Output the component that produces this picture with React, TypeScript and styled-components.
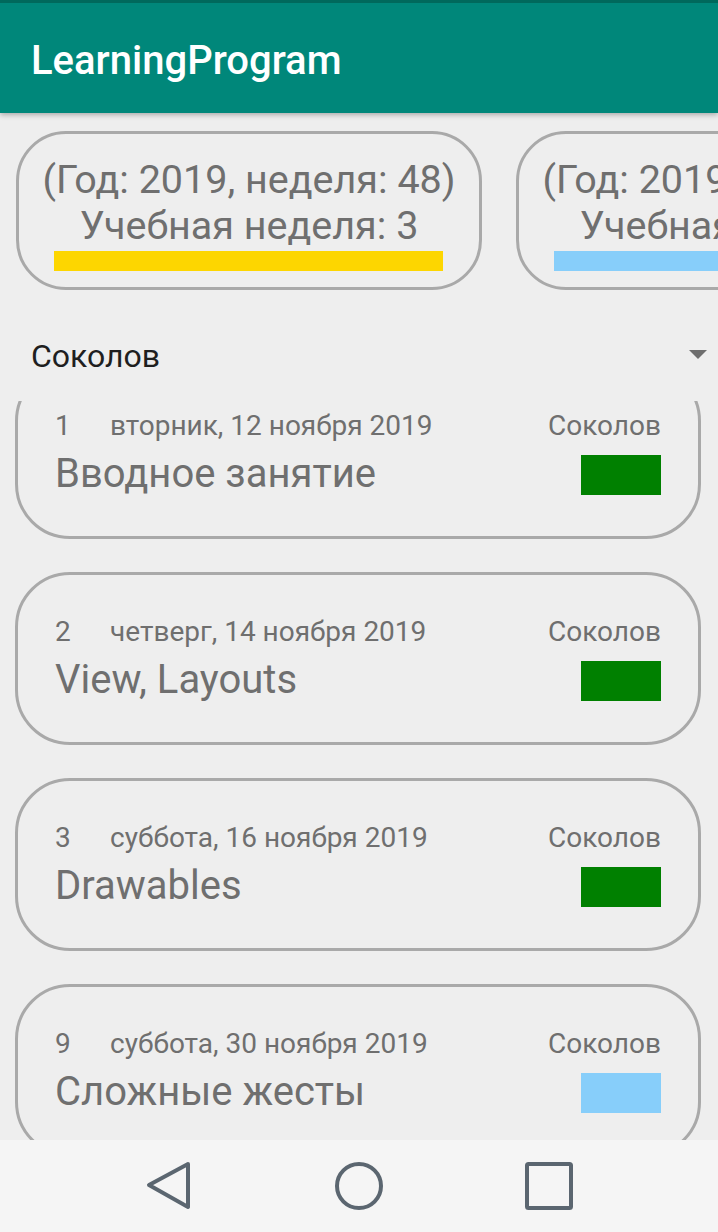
import React, { useLayoutEffect, useRef } from "react";
import styled, { createGlobalStyle } from "styled-components";

const GlobalStyle = createGlobalStyle`
  html, body { margin: 0; padding: 0; background: #eeeeee; }
  body { font-family: Roboto, "Noto Sans", Arial, sans-serif; }
  * { box-sizing: border-box; }
`;

const Screen = styled.div`
  width: 718px;
  height: 1232px;
  display: flex;
  flex-direction: column;
  background: #eeeeee;
  overflow: hidden;
`;

const AppBar = styled.header`
  position: relative;
  z-index: 2;
  height: 113px;
  flex: none;
  background: #00877a;
  border-top: 3px solid #00695c;
  box-shadow: 0 2px 5px rgba(0, 0, 0, 0.28);
  padding: 34px 0 0 31px;
`;

const Title = styled.h1`
  margin: 0;
  font-family: Roboto, Arial, sans-serif;
  font-weight: 500;
  font-size: 40px;
  line-height: 47px;
  color: #ffffff;
`;

const WeekStrip = styled.div`
  flex: none;
  display: flex;
  gap: 34px;
  padding: 18px 0 0 16px;
  overflow: hidden;
`;

const WeekCard = styled.div`
  flex: none;
  width: 466px;
  height: 159px;
  border: 3px solid #a9a9a9;
  border-radius: 50px;
  padding: 23px 0 0 0;
  display: flex;
  flex-direction: column;
  align-items: stretch;
`;

const WeekLine = styled.div`
  display: flex;
  justify-content: center;
  font-size: 39.5px;
  line-height: 46px;
  color: #6f6f6f;
  white-space: nowrap;
`;

const WeekBar = styled.div<{ $color: string }>`
  margin: 2px 36px 0 35px;
  height: 20px;
  background: ${(p) => p.$color};
`;

const Spinner = styled.div`
  flex: none;
  display: flex;
  align-items: center;
  justify-content: space-between;
  padding: 47px 11px 26px 31px;
`;

const SpinnerText = styled.span`
  font-size: 32px;
  line-height: 38px;
  color: #1f1f1f;
`;

const SpinnerArrow = styled.span`
  width: 0;
  height: 0;
  border-left: 9px solid transparent;
  border-right: 9px solid transparent;
  border-top: 9px solid #6e6e6e;
  margin-top: -4px;
`;

const LessonList = styled.div`
  flex: 1;
  min-height: 0;
  overflow: hidden;
  display: flex;
  flex-direction: column;
  gap: 33px;
  padding: 16px 17px 16px 15px;
`;

const LessonCard = styled.div`
  flex: none;
  height: 173px;
  border: 3px solid #a9a9a9;
  border-radius: 55px;
  padding: 40px 37px 0 37px;
  display: flex;
  flex-direction: column;
`;

const MetaRow = styled.div`
  display: flex;
  align-items: baseline;
  font-size: 28px;
  line-height: 33px;
  color: #6f6f6f;
  white-space: nowrap;
`;

const Num = styled.span`
  width: 55px;
  flex: none;
`;

const DateText = styled.span`
  flex: 1;
`;

const Teacher = styled.span`
  flex: none;
`;

const TitleRow = styled.div`
  margin-top: 8px;
  display: flex;
  align-items: center;
  justify-content: space-between;
`;

const LessonTitle = styled.span`
  font-size: 40px;
  line-height: 47px;
  color: #6f6f6f;
  white-space: nowrap;
`;

const Swatch = styled.span<{ $color: string }>`
  flex: none;
  width: 80px;
  height: 40px;
  margin-top: 3px;
  background: ${(p) => p.$color};
`;

const NavBar = styled.nav`
  flex: none;
  height: 92px;
  background: #f5f5f5;
  display: flex;
  justify-content: center;
  align-items: center;
`;

const NavButton = styled.div`
  width: 190px;
  height: 92px;
  display: flex;
  align-items: center;
  justify-content: center;
`;

const weeks = [
  { year: 2019, week: 48, study: 3, color: "#fdd600" },
  { year: 2019, week: 49, study: 4, color: "#87cefa" },
];

const lessons = [
  { n: 1, date: "вторник, 12 ноября 2019", title: "Вводное занятие", color: "#008000" },
  { n: 2, date: "четверг, 14 ноября 2019", title: "View, Layouts", color: "#008000" },
  { n: 3, date: "суббота, 16 ноября 2019", title: "Drawables", color: "#008000" },
  { n: 9, date: "суббота, 30 ноября 2019", title: "Сложные жесты", color: "#87cefa" },
  { n: 10, date: "вторник, 3 декабря 2019", title: "Анимации", color: "#87cefa" },
];

const navStroke = "#5b6670";

export default function App() {
  const listRef = useRef<HTMLDivElement>(null);
  useLayoutEffect(() => {
    if (listRef.current) listRef.current.scrollTop = 51;
  }, []);

  return (
    <>
      <GlobalStyle />
      <Screen>
        <AppBar>
          <Title>LearningProgram</Title>
        </AppBar>
        <WeekStrip>
          {weeks.map((w) => (
            <WeekCard key={w.week}>
              <WeekLine>
                (Год: {w.year}, неделя: {w.week})
              </WeekLine>
              <WeekLine>Учебная неделя: {w.study}</WeekLine>
              <WeekBar $color={w.color} />
            </WeekCard>
          ))}
        </WeekStrip>
        <Spinner>
          <SpinnerText>Соколов</SpinnerText>
          <SpinnerArrow />
        </Spinner>
        <LessonList ref={listRef}>
          {lessons.map((l) => (
            <LessonCard key={l.n}>
              <MetaRow>
                <Num>{l.n}</Num>
                <DateText>{l.date}</DateText>
                <Teacher>Соколов</Teacher>
              </MetaRow>
              <TitleRow>
                <LessonTitle>{l.title}</LessonTitle>
                <Swatch $color={l.color} />
              </TitleRow>
            </LessonCard>
          ))}
        </LessonList>
        <NavBar>
          <NavButton>
            <svg width="48" height="52" viewBox="0 0 48 52">
              <path
                d="M43 4 L4 25 L43 47 Z"
                fill="none"
                stroke={navStroke}
                strokeWidth="4"
                strokeLinejoin="round"
              />
            </svg>
          </NavButton>
          <NavButton>
            <svg width="52" height="52" viewBox="0 0 52 52">
              <circle cx="26" cy="26" r="22" fill="none" stroke={navStroke} strokeWidth="4" />
            </svg>
          </NavButton>
          <NavButton>
            <svg width="52" height="52" viewBox="0 0 52 52">
              <rect x="4" y="4" width="44" height="44" rx="1.5" fill="none" stroke={navStroke} strokeWidth="4" />
            </svg>
          </NavButton>
        </NavBar>
      </Screen>
    </>
  );
}
